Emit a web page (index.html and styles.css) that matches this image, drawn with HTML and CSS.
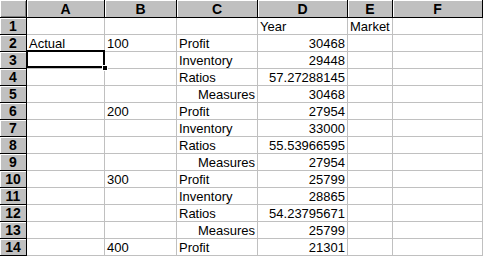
FILE: index.html
```html
<!DOCTYPE html>
<html>
<head>
<meta charset="utf-8">
<link rel="stylesheet" href="styles.css">
</head>
<body>
<div class="sheet">
  <div class="corner"></div>
  <div class="ch">A</div><div class="ch">B</div><div class="ch">C</div><div class="ch">D</div><div class="ch">E</div><div class="ch">F</div>

  <div class="rh">1</div><div class="c"></div><div class="c"></div><div class="c"></div><div class="c">Year</div><div class="c">Market</div><div class="c"></div>
  <div class="rh">2</div><div class="c">Actual</div><div class="c">100</div><div class="c">Profit</div><div class="c n">30468</div><div class="c"></div><div class="c"></div>
  <div class="rh">3</div><div class="c sel"><span class="selbox"><span class="handle"></span></span></div><div class="c"></div><div class="c">Inventory</div><div class="c n">29448</div><div class="c"></div><div class="c"></div>
  <div class="rh">4</div><div class="c"></div><div class="c"></div><div class="c">Ratios</div><div class="c n">57.27288145</div><div class="c"></div><div class="c"></div>
  <div class="rh">5</div><div class="c"></div><div class="c"></div><div class="c n">Measures</div><div class="c n">30468</div><div class="c"></div><div class="c"></div>
  <div class="rh">6</div><div class="c"></div><div class="c">200</div><div class="c">Profit</div><div class="c n">27954</div><div class="c"></div><div class="c"></div>
  <div class="rh">7</div><div class="c"></div><div class="c"></div><div class="c">Inventory</div><div class="c n">33000</div><div class="c"></div><div class="c"></div>
  <div class="rh">8</div><div class="c"></div><div class="c"></div><div class="c">Ratios</div><div class="c n">55.53966595</div><div class="c"></div><div class="c"></div>
  <div class="rh">9</div><div class="c"></div><div class="c"></div><div class="c n">Measures</div><div class="c n">27954</div><div class="c"></div><div class="c"></div>
  <div class="rh">10</div><div class="c"></div><div class="c">300</div><div class="c">Profit</div><div class="c n">25799</div><div class="c"></div><div class="c"></div>
  <div class="rh">11</div><div class="c"></div><div class="c"></div><div class="c">Inventory</div><div class="c n">28865</div><div class="c"></div><div class="c"></div>
  <div class="rh">12</div><div class="c"></div><div class="c"></div><div class="c">Ratios</div><div class="c n">54.23795671</div><div class="c"></div><div class="c"></div>
  <div class="rh">13</div><div class="c"></div><div class="c"></div><div class="c n">Measures</div><div class="c n">25799</div><div class="c"></div><div class="c"></div>
  <div class="rh">14</div><div class="c"></div><div class="c">400</div><div class="c">Profit</div><div class="c n">21301</div><div class="c"></div><div class="c"></div>
</div>
</body>
</html>
```
FILE: styles.css
```css
html, body {
  margin: 0;
  padding: 0;
  background: #fff;
}
body {
  width: 484px;
  height: 256px;
  overflow: hidden;
  font-family: "Liberation Sans", Arial, sans-serif;
  font-size: 13px;
  color: #000;
}
.sheet {
  display: grid;
  grid-template-columns: 27px 78px 72px 81px 90px 45px 90px;
  grid-template-rows: 18px repeat(14, 17px);
  width: 483px;
}
.corner, .ch, .rh {
  box-sizing: border-box;
  background: #c0c0c0;
  border-right: 1px solid #000;
  border-bottom: 1px solid #000;
  box-shadow: inset 1px 1px 0 #fff;
  font-weight: bold;
  text-align: center;
}
.corner {
  box-shadow: inset 1px 1px 0 #fff, inset -1px -1px 0 #808080;
}
.ch {
  font-size: 14px;
  line-height: 18px;
}
.rh {
  font-size: 14px;
  line-height: 17px;
}
.c {
  box-sizing: border-box;
  border-right: 1px solid #c0c0c0;
  border-bottom: 1px solid #c0c0c0;
  padding: 1px 2px 0 2px;
  line-height: 15px;
  white-space: nowrap;
  overflow: visible;
}
.n {
  text-align: right;
}
.sel {
  position: relative;
}
.selbox {
  position: absolute;
  left: -1px;
  top: -2px;
  width: 79px;
  height: 18px;
  border: 2px solid #000;
  box-sizing: border-box;
  z-index: 1;
}
.handle {
  position: absolute;
  right: -5px;
  bottom: -5px;
  width: 6px;
  height: 6px;
  background: #000;
  border: 1px solid #fff;
  box-sizing: border-box;
}
```
